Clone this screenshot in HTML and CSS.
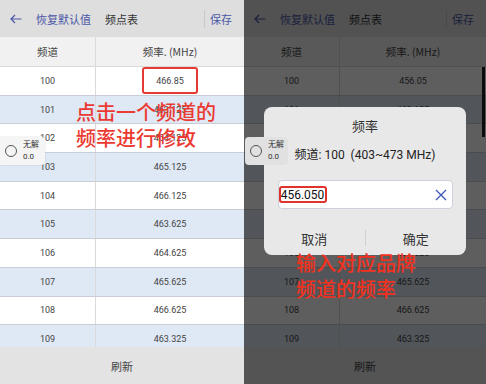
FILE: index.html
```html
<!DOCTYPE html>
<html lang="zh">
<head>
<meta charset="utf-8">
<title>频点表</title>
<link rel="stylesheet" href="styles.css">
</head>
<body>
<div class="screen">
  <section class="panel panel-a">
    <header class="bar">
      <svg class="back" width="12" height="10" viewBox="0 0 12 10"><path d="M11.5 5H1M5 1L1 5l4 4" fill="none" stroke="currentColor" stroke-width="1.2"/></svg>
      <span class="link">恢复默认值</span>
      <span class="title">频点表</span>
      <span class="sep"></span>
      <span class="link">保存</span>
    </header>
    <div class="thead"><div class="c1">频道</div><div class="c2">频率. (MHz)</div></div>
    <div class="rows">
      <div class="row"><div class="c1">100</div><div class="c2"><span class="mark">466.85</span></div></div>
      <div class="row alt"><div class="c1">101</div><div class="c2">463.125</div></div>
      <div class="row"><div class="c1">102</div><div class="c2">464.125</div></div>
      <div class="row alt"><div class="c1">103</div><div class="c2">465.125</div></div>
      <div class="row"><div class="c1">104</div><div class="c2">466.125</div></div>
      <div class="row alt"><div class="c1">105</div><div class="c2">463.625</div></div>
      <div class="row"><div class="c1">106</div><div class="c2">464.625</div></div>
      <div class="row alt"><div class="c1">107</div><div class="c2">465.625</div></div>
      <div class="row"><div class="c1">108</div><div class="c2">466.625</div></div>
      <div class="row alt"><div class="c1">109</div><div class="c2">463.325</div></div>
    </div>
    <footer class="foot">刷新</footer>
    <p class="note note-a">点击一个频道的<br>频率进行修改</p>
  </section>

  <section class="panel panel-b">
    <header class="bar">
      <svg class="back" width="12" height="10" viewBox="0 0 12 10"><path d="M11.5 5H1M5 1L1 5l4 4" fill="none" stroke="currentColor" stroke-width="1.2"/></svg>
      <span class="link">恢复默认值</span>
      <span class="title">频点表</span>
      <span class="sep"></span>
      <span class="link">保存</span>
    </header>
    <div class="thead"><div class="c1">频道</div><div class="c2">频率. (MHz)</div></div>
    <div class="rows">
      <div class="row"><div class="c1">100</div><div class="c2">456.05</div></div>
      <div class="row alt"><div class="c1">101</div><div class="c2">463.125</div></div>
      <div class="row"><div class="c1">102</div><div class="c2">464.125</div></div>
      <div class="row alt"><div class="c1">103</div><div class="c2">465.125</div></div>
      <div class="row"><div class="c1">104</div><div class="c2">466.125</div></div>
      <div class="row alt"><div class="c1">105</div><div class="c2">463.625</div></div>
      <div class="row"><div class="c1">106</div><div class="c2">464.625</div></div>
      <div class="row alt"><div class="c1">107</div><div class="c2">465.625</div></div>
      <div class="row"><div class="c1">108</div><div class="c2">466.625</div></div>
      <div class="row alt"><div class="c1">109</div><div class="c2">463.325</div></div>
      <span class="scroll"></span>
    </div>
    <footer class="foot">刷新</footer>
    <div class="dim"></div>
    <div class="dialog">
      <h2 class="dlg-title">频率</h2>
      <p class="dlg-info">频道: 100&nbsp;&nbsp;(403~473 MHz)</p>
      <div class="input">
        <span class="mark-input">456.050</span>
        <svg class="clear" width="12" height="12" viewBox="0 0 12 12"><path d="M1 1L11 11M11 1L1 11" fill="none" stroke="currentColor" stroke-width="1.3"/></svg>
      </div>
      <div class="actions">
        <span class="btn">取消</span>
        <span class="vsep"></span>
        <span class="btn">确定</span>
      </div>
    </div>
    <p class="note note-b">输入对应品牌<br>频道的频率</p>
  </section>

  <div class="float float-a"><span class="ring"></span><span class="ftext"><span>无解</span><span>0.0</span></span></div>
  <div class="float float-b"><span class="ring"></span><span class="ftext"><span>无解</span><span>0.0</span></span></div>
</div>
</body>
</html>
```

FILE: styles.css
```css
* { box-sizing: border-box; margin: 0; padding: 0; }
html, body { width: 486px; height: 384px; overflow: hidden; background: #fff; }
body { font-family: Roboto, "Noto Sans CJK SC", sans-serif; color: #333; }

.screen { position: relative; display: flex; width: 486px; height: 384px; }

.panel { position: relative; display: flex; flex-direction: column; height: 384px; overflow: hidden; }
.panel-a { width: 244px; }
.panel-b { width: 242px; }

.bar {
  height: 37px; flex: none; display: flex; align-items: center;
  background: #dedede; padding: 0 12px 0 10px;
  font-family: "Noto Sans CJK SC", sans-serif; font-size: 11px;
}
.back { color: #4b56a6; margin-right: 14px; }
.link { color: #4b56a6; }
.title { color: #333; margin-left: 14px; }
.sep { margin-left: auto; width: 1px; height: 18px; background: #c8c8c8; margin-right: 5px; }

.thead {
  height: 30px; flex: none; display: flex; background: #f1f1f1;
  font-family: "Noto Sans CJK SC", sans-serif; font-size: 10.5px; color: #444;
  border-bottom: 1px solid #d8d8d8;
}
.c1 { width: 95px; display: flex; align-items: center; justify-content: center; }
.c2 { flex: 1; display: flex; align-items: center; justify-content: center; border-left: 1px solid #dadada; }

.rows { position: relative; flex: 1; overflow: hidden; }
.row {
  height: 28.7px; display: flex; background: #fff;
  border-bottom: 1px solid #c9ced6;
  font-size: 9px; color: #444;
}
.row.alt { background: #dfe8f5; }

.mark {
  display: inline-flex; align-items: center; justify-content: center;
  width: 56px; height: 27px; border: 2px solid #e53a33; border-radius: 3px;
}

.scroll { position: absolute; right: 1px; top: 0; width: 3px; height: 70px; background: #222; }

.foot {
  height: 37px; flex: none; display: flex; align-items: center; justify-content: center;
  background: #e3e3e3; font-family: "Noto Sans CJK SC", sans-serif; font-size: 11px; color: #444;
}

.note {
  position: absolute; font-family: "Noto Sans CJK SC", sans-serif; font-size: 20px; font-weight: 500;
  color: #eb3a31; white-space: nowrap;
}
.note-a { left: 76px; top: 99px; line-height: 25.5px; }
.note-b { left: 52px; top: 250px; line-height: 26px; color: #f2311f; }

.dim { position: absolute; inset: 0; background: rgba(0, 0, 0, 0.63); }

.dialog {
  position: absolute; left: 20px; top: 107px; width: 202px; height: 148px;
  background: #e8e8e8; border-radius: 8px;
  display: flex; flex-direction: column; align-items: center;
  font-family: "Noto Sans CJK SC", sans-serif; color: #222;
}
.dlg-title { margin-top: 10px; font-size: 13px; font-weight: 400; line-height: 18px; color: #333; }
.dlg-info { margin-top: 12px; font-size: 12px; line-height: 16px; font-family: Roboto, "Noto Sans CJK SC", sans-serif; }
.input {
  margin-top: 17px; width: 175px; height: 29px; background: #fff;
  border: 1px solid #cdd1da; border-radius: 4px;
  display: flex; align-items: center; justify-content: space-between; padding: 0 5px 0 0;
}
.mark-input {
  display: inline-flex; align-items: center; justify-content: center;
  width: 48px; height: 17px; border: 2px solid #e0332d; border-radius: 3px;
  font-family: Roboto, sans-serif; font-size: 12px; color: #111;
}
.clear { color: #3b57b4; }
.actions { margin-top: 16px; width: 100%; height: 26px; display: flex; align-items: center; }
.btn { flex: 1; text-align: center; font-size: 13px; color: #333; }
.vsep { width: 1px; height: 16px; background: #cfcfcf; }

.float {
  position: absolute; top: 137px; height: 28px; display: flex; align-items: center; gap: 6px; padding-left: 5px;
}
.float-a { left: 0; width: 45px; background: #f5f5f5; border-radius: 0 4px 4px 0; box-shadow: 0 0 2px rgba(0,0,0,0.15); }
.float-b { left: 245px; width: 43px; background: #e1e1e1; border-radius: 4px; }
.ring { width: 12px; height: 12px; border: 1.2px solid #555; border-radius: 50%; flex: none; }
.ftext { display: flex; flex-direction: column; font-size: 8px; line-height: 12px; color: #333; font-family: Roboto, "Noto Sans CJK SC", sans-serif; }
```
